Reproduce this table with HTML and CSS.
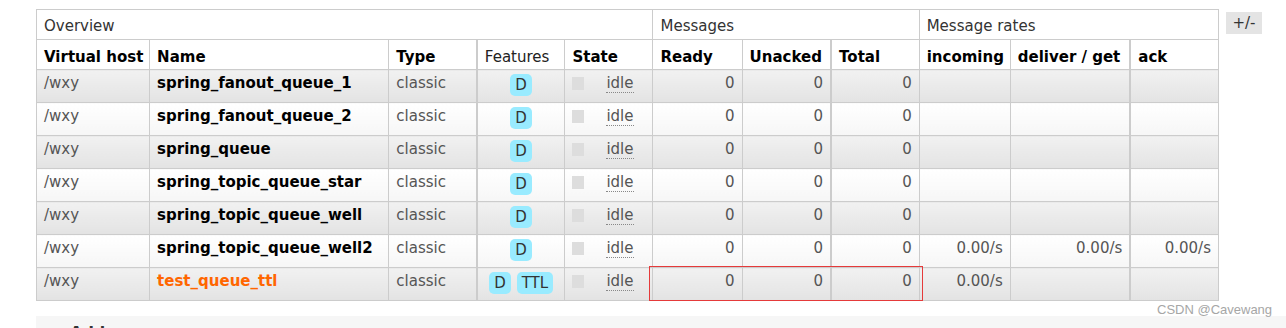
FILE: index.html
```html
<!DOCTYPE html>
<html lang="en">
<head>
<meta charset="utf-8">
<title>Queues</title>
<link rel="stylesheet" href="styles.css">
</head>
<body>
<div class="page">
  <div class="queues">
    <table class="list">
      <colgroup>
        <col class="c-vhost"><col class="c-name"><col class="c-type"><col class="c-feat"><col class="c-state">
        <col class="c-num"><col class="c-num"><col class="c-total">
        <col class="c-in"><col class="c-deliver"><col class="c-ack">
      </colgroup>
      <thead>
        <tr class="group">
          <th colspan="5">Overview</th>
          <th colspan="3">Messages</th>
          <th colspan="3">Message rates</th>
        </tr>
        <tr class="cols">
          <th>Virtual host</th>
          <th>Name</th>
          <th>Type</th>
          <th class="sep plain">Features</th>
          <th>State</th>
          <th>Ready</th>
          <th>Unacked</th>
          <th class="sep">Total</th>
          <th>incoming</th>
          <th>deliver / get</th>
          <th class="sep">ack</th>
        </tr>
      </thead>
      <tbody>
        <tr class="alt1">
          <td>/wxy</td><td class="name">spring_fanout_queue_1</td><td>classic</td>
          <td class="sep feat"><div class="badges"><span class="badge">D</span></div></td>
          <td><div class="state"><span class="sq"></span><abbr>idle</abbr></div></td>
          <td class="num">0</td><td class="num">0</td><td class="num sep">0</td>
          <td></td><td></td><td class="sep"></td>
        </tr>
        <tr class="alt2">
          <td>/wxy</td><td class="name">spring_fanout_queue_2</td><td>classic</td>
          <td class="sep feat"><div class="badges"><span class="badge">D</span></div></td>
          <td><div class="state"><span class="sq"></span><abbr>idle</abbr></div></td>
          <td class="num">0</td><td class="num">0</td><td class="num sep">0</td>
          <td></td><td></td><td class="sep"></td>
        </tr>
        <tr class="alt1">
          <td>/wxy</td><td class="name">spring_queue</td><td>classic</td>
          <td class="sep feat"><div class="badges"><span class="badge">D</span></div></td>
          <td><div class="state"><span class="sq"></span><abbr>idle</abbr></div></td>
          <td class="num">0</td><td class="num">0</td><td class="num sep">0</td>
          <td></td><td></td><td class="sep"></td>
        </tr>
        <tr class="alt2">
          <td>/wxy</td><td class="name">spring_topic_queue_star</td><td>classic</td>
          <td class="sep feat"><div class="badges"><span class="badge">D</span></div></td>
          <td><div class="state"><span class="sq"></span><abbr>idle</abbr></div></td>
          <td class="num">0</td><td class="num">0</td><td class="num sep">0</td>
          <td></td><td></td><td class="sep"></td>
        </tr>
        <tr class="alt1">
          <td>/wxy</td><td class="name">spring_topic_queue_well</td><td>classic</td>
          <td class="sep feat"><div class="badges"><span class="badge">D</span></div></td>
          <td><div class="state"><span class="sq"></span><abbr>idle</abbr></div></td>
          <td class="num">0</td><td class="num">0</td><td class="num sep">0</td>
          <td></td><td></td><td class="sep"></td>
        </tr>
        <tr class="alt2">
          <td>/wxy</td><td class="name">spring_topic_queue_well2</td><td>classic</td>
          <td class="sep feat"><div class="badges"><span class="badge">D</span></div></td>
          <td><div class="state"><span class="sq"></span><abbr>idle</abbr></div></td>
          <td class="num">0</td><td class="num">0</td><td class="num sep">0</td>
          <td class="num">0.00/s</td><td class="num">0.00/s</td><td class="num sep">0.00/s</td>
        </tr>
        <tr class="alt1">
          <td>/wxy</td><td class="name hl">test_queue_ttl</td><td>classic</td>
          <td class="sep feat"><div class="badges"><span class="badge">D</span><span class="badge">TTL</span></div></td>
          <td><div class="state"><span class="sq"></span><abbr>idle</abbr></div></td>
          <td class="num">0</td><td class="num">0</td><td class="num sep">0</td>
          <td class="num">0.00/s</td><td></td><td class="sep"></td>
        </tr>
      </tbody>
    </table>
    <button class="toggle" type="button">+/-</button>
  </div>
  <div class="section">
    <h2>Add a new queue</h2>
  </div>
  <div class="mark"></div>
  <div class="watermark">CSDN @Cavewang</div>
</div>
</body>
</html>
```
FILE: styles.css
```css
html, body {
  margin: 0;
  padding: 0;
  background: #fff;
  overflow: hidden;
}
body {
  font-family: "DejaVu Sans", Verdana, sans-serif;
  font-size: 15px;
  color: #333;
}
.page {
  position: relative;
  padding: 9px 0 0 36px;
  width: 1400px;
  height: 400px;
}
.queues {
  display: flex;
  align-items: flex-start;
  gap: 7px;
}
table.list {
  border-collapse: collapse;
  table-layout: fixed;
  width: 1183px;
  border: 1px solid #ccc;
}
.c-vhost { width: 113px; }
.c-name { width: 239px; }
.c-type { width: 88px; }
.c-feat { width: 88px; }
.c-state { width: 88px; }
.c-num { width: 89px; }
.c-total { width: 88px; }
.c-in { width: 91px; }
.c-deliver { width: 120px; }
.c-ack { width: 88px; }

table.list th,
table.list td {
  box-sizing: border-box;
  border: 1px solid #ccc;
  text-align: left;
  white-space: nowrap;
  overflow: hidden;
  vertical-align: top;
}
table.list tr.group,
table.list tr.cols {
  height: 30px;
}
table.list th {
  height: 30px;
  background: #fff;
  padding: 7px 7px 0 7px;
  line-height: 18px;
  font-weight: bold;
  color: #000;
}
table.list tr.group th {
  font-weight: normal;
  color: #333;
}
table.list tr.cols th {
  padding-top: 8px;
}
table.list th.plain {
  font-weight: normal;
  color: #222;
}
table.list tbody tr {
  height: 33px;
}
table.list td {
  height: 33px;
  padding: 4px 7px 0 7px;
  line-height: 18px;
  color: #555;
}
table.list .sep {
  border-left: 2px solid #ccc;
}
tr.alt1 td {
  background: linear-gradient(to bottom, #f1f1f1 0%, #e3e3e3 100%);
}
tr.alt2 td {
  background: linear-gradient(to bottom, #ffffff 0%, #f6f6f6 100%);
}
table.list td.name {
  font-weight: bold;
  color: #000;
}
table.list td.hl {
  color: #ff6600;
}
table.list td.num {
  text-align: right;
}
.badges {
  display: flex;
  justify-content: center;
  gap: 6px;
}
.badge {
  display: block;
  height: 22px;
  line-height: 22px;
  padding: 0 5px;
  border-radius: 5px;
  background: #99ebff;
  color: #333;
}
.state {
  display: flex;
  align-items: center;
  gap: 22px;
  height: 18px;
}
.sq {
  width: 12px;
  height: 13px;
  background: #dddddd;
  flex: none;
}
abbr {
  text-decoration: none;
  border-bottom: 1px dotted #888;
  line-height: 18px;
  color: #555;
}
.toggle {
  margin-top: 3px;
  height: 22px;
  width: 36px;
  padding: 0;
  border: none;
  background: #e4e4e4;
  font-family: "DejaVu Sans", Verdana, sans-serif;
  font-size: 15px;
  color: #333;
  line-height: 22px;
}
.section {
  margin-top: 15px;
  background: #f6f6f6;
  padding: 7px 0 0 34px;
  height: 40px;
}
.section h2 {
  margin: 0;
  font-size: 16px;
  line-height: 20px;
  font-weight: bold;
  color: #333;
}
.mark {
  position: absolute;
  left: 649px;
  top: 266px;
  width: 272px;
  height: 33px;
  border: 1px solid #e53a3a;
}
.watermark {
  position: absolute;
  left: 1157px;
  top: 302px;
  font-family: "Liberation Sans", Arial, sans-serif;
  font-size: 13px;
  line-height: 16px;
  color: #a6a6a6;
}
```
